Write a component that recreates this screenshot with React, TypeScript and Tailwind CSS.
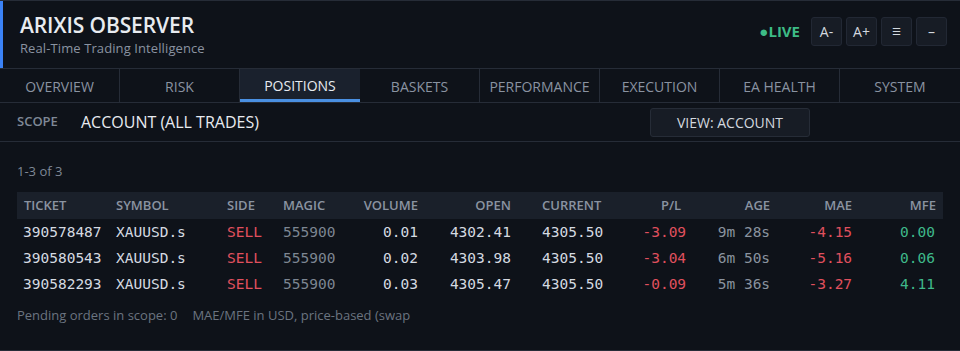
import React from 'react';

const tabs = ['OVERVIEW', 'RISK', 'POSITIONS', 'BASKETS', 'PERFORMANCE', 'EXECUTION', 'EA HEALTH', 'SYSTEM'];

const rows = [
  { ticket: '390578487', symbol: 'XAUUSD.s', side: 'SELL', magic: '555900', volume: '0.01', open: '4302.41', current: '4305.50', pl: '-3.09', age: '9m 28s', mae: '-4.15', mfe: '0.00' },
  { ticket: '390580543', symbol: 'XAUUSD.s', side: 'SELL', magic: '555900', volume: '0.02', open: '4303.98', current: '4305.50', pl: '-3.04', age: '6m 50s', mae: '-5.16', mfe: '0.06' },
  { ticket: '390582293', symbol: 'XAUUSD.s', side: 'SELL', magic: '555900', volume: '0.03', open: '4305.47', current: '4305.50', pl: '-0.09', age: '5m 36s', mae: '-3.27', mfe: '4.11' },
];

const sans = { fontFamily: "'Open Sans', 'Noto Sans', sans-serif" };
const mono = { fontFamily: "'DejaVu Sans Mono', 'Liberation Mono', monospace" };

export default function App() {
  return (
    <div style={sans} className="w-[960px] h-[351px] overflow-hidden bg-[#0e1219] border-t border-b border-[#262c37] flex flex-col">
      {/* Header */}
      <div className="h-[67px] flex items-center border-l-[3px] border-[#3b82f6] pl-[17px] pr-[13px]">
        <div className="flex-1">
          <h1 className="text-[21px] leading-[27px] font-semibold text-[#e8ebf0] tracking-[-0.1px]">ARIXIS OBSERVER</h1>
          <p className="text-[13px] leading-[18px] text-[#8a93a1] tracking-[0.1px]">Real-Time Trading Intelligence</p>
        </div>
        <div className="flex items-center -mt-[6px]">
          <span className="text-[15px] font-bold text-[#3dbb86] mr-[11px]">●LIVE</span>
          <div className="flex gap-[4px]">
            {['A-', 'A+', '☰', '–'].map(b => (
              <button key={b} className="w-[31px] h-[29px] rounded-[3px] bg-[#171c25] border border-[#222834] text-[14px] text-[#d3d8df] flex items-center justify-center">
                {b === '☰' ? <span className="text-[10px]">☰</span> : b}
              </button>
            ))}
          </div>
        </div>
      </div>

      {/* Tabs */}
      <div className="h-[35px] flex border-t border-b border-[#262c37]">
        {tabs.map((t, i) => (
          <div
            key={t}
            className={
              t === 'POSITIONS'
                ? 'w-[120px] flex items-center justify-center text-[14px] text-[#e8ebf0] bg-[#1a212d] border-b-[3px] border-[#4a90e2] pt-[3px]'
                : 'w-[120px] flex items-center justify-center text-[14px] text-[#8a93a1] pt-[1px] ' + (i < tabs.length - 1 ? 'border-r border-[#262c37]' : '')
            }
          >
            {t}
          </div>
        ))}
      </div>

      {/* Scope */}
      <div className="h-[39px] flex items-center px-[17px] border-b border-[#262c37] shrink-0">
        <span className="text-[13px] font-semibold text-[#7f8896] w-[64px]">SCOPE</span>
        <span className="text-[16px] font-medium text-[#e8ebf0] w-[569px]">ACCOUNT (ALL TRADES)</span>
        <button className="w-[160px] h-[29px] rounded-[3px] bg-[#171c25] border border-[#262c37] text-[14px] text-[#d3d8df]">
          VIEW: ACCOUNT
        </button>
      </div>

      {/* Content */}
      <div className="px-[17px] pt-[20px]">
        <p className="text-[13px] text-[#7f8896] leading-[18px]">1-3 of 3</p>
        <table className="mt-[12px] w-[926px] border-collapse">
          <thead>
            <tr className="bg-[#1a202a] text-[13px] font-semibold text-[#8a93a1] h-[27px]">
              <th className="text-left pl-[7px] w-[99px] font-semibold">TICKET</th>
              <th className="text-left w-[111px] font-semibold">SYMBOL</th>
              <th className="text-left w-[56px] font-semibold">SIDE</th>
              <th className="text-left w-[70px] font-semibold">MAGIC</th>
              <th className="text-right w-[65px] font-semibold">VOLUME</th>
              <th className="text-right w-[93px] font-semibold">OPEN</th>
              <th className="text-left pl-[31px] w-[92px] font-semibold">CURRENT</th>
              <th className="text-right w-[84px] font-semibold pr-[6px]">P/L</th>
              <th className="text-right w-[83px] font-semibold">AGE</th>
              <th className="text-right w-[82px] font-semibold">MAE</th>
              <th className="text-right pr-[7px] font-semibold">MFE</th>
            </tr>
          </thead>
          <tbody style={mono} className="text-[14.5px]">
            {rows.map(r => (
              <tr key={r.ticket}>
                <td className="h-[26px] pl-[6px] pt-[2px] text-[#d5dae1]">{r.ticket}</td>
                <td className="pt-[2px] text-[#d5dae1]">{r.symbol}</td>
                <td className="pt-[2px] text-[#e0505e]">{r.side}</td>
                <td className="pt-[2px] text-[#7d8692]">{r.magic}</td>
                <td className="pt-[2px] text-right text-[#d5dae1]">{r.volume}</td>
                <td className="pt-[2px] text-right text-[#d5dae1]">{r.open}</td>
                <td className="pt-[2px] pl-[31px] text-[#d5dae1]">{r.current}</td>
                <td className="pt-[2px] text-right text-[#e0505e] pr-[1px]">{r.pl}</td>
                <td className="pt-[2px] text-right text-[#8a939f]">{r.age}</td>
                <td className="pt-[2px] text-right text-[#e0505e]">{r.mae}</td>
                <td className="pt-[2px] text-right pr-[8px] text-[#3fb98a]">{r.mfe}</td>
              </tr>
            ))}
          </tbody>
        </table>
        <p className="mt-[9px] text-[13px] text-[#6b7480] whitespace-nowrap">
          Pending orders in scope: 0<span className="inline-block w-[15px]"></span>MAE/MFE in USD, price-based (swap
        </p>
      </div>
    </div>
  );
}
